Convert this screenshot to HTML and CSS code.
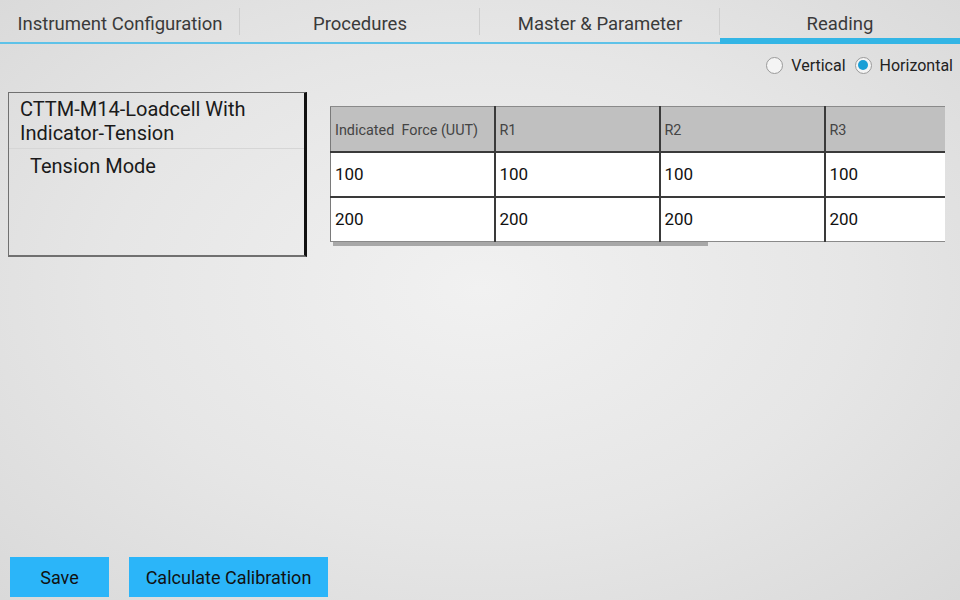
FILE: index.html
```html
<!DOCTYPE html>
<html lang="en">
<head>
    <meta charset="UTF-8">
    <meta name="viewport" content="width=device-width, initial-scale=1.0">
    <title>Reading</title>
    <link rel="stylesheet" href="styles.css">
</head>
<body>
    <div class="screen">
        <div class="tabs">
            <div class="tab">Instrument Configuration</div>
            <div class="tab">Procedures</div>
            <div class="tab">Master &amp; Parameter</div>
            <div class="tab active">Reading</div>
        </div>

        <div class="orientation">
            <label class="radio"><span class="dot"></span>Vertical</label>
            <label class="radio checked"><span class="dot"></span>Horizontal</label>
        </div>

        <div class="content">
            <div class="instrument-box">
                <div class="instrument-name">CTTM-M14-Loadcell With Indicator-Tension</div>
                <div class="instrument-mode">Tension Mode</div>
            </div>

            <div class="table-wrap">
                <table class="readings">
                    <thead>
                        <tr>
                            <th>Indicated&nbsp; Force (UUT)</th>
                            <th>R1</th>
                            <th>R2</th>
                            <th>R3</th>
                        </tr>
                    </thead>
                    <tbody>
                        <tr>
                            <td>100</td>
                            <td>100</td>
                            <td>100</td>
                            <td>100</td>
                        </tr>
                        <tr>
                            <td>200</td>
                            <td>200</td>
                            <td>200</td>
                            <td>200</td>
                        </tr>
                    </tbody>
                </table>
                <div class="scrollbar"></div>
            </div>
        </div>

        <div class="actions">
            <button class="btn save">Save</button>
            <button class="btn calc">Calculate Calibration</button>
        </div>
    </div>
</body>
</html>
```

FILE: styles.css
```css
html, body {
    margin: 0;
    padding: 0;
}
body {
    font-family: Roboto, "Noto Sans", sans-serif;
    color: #222;
    background: radial-gradient(ellipse at 50% 48%, #f1f1f1 0%, #e6e6e6 55%, #d9d9d9 100%);
    width: 960px;
    height: 600px;
    overflow: hidden;
}
.screen {
    display: flex;
    flex-direction: column;
    height: 600px;
}

/* tabs */
.tabs {
    display: flex;
    height: 44px;
}
.tab {
    width: 240px;
    height: 44px;
    box-sizing: border-box;
    padding-top: 13px;
    text-align: center;
    font-size: 18.5px;
    color: #3a3a3a;
    border-bottom: 2px solid #5ec2e8;
    position: relative;
}
.tab + .tab::before {
    content: "";
    position: absolute;
    left: -1px;
    top: 8px;
    height: 27px;
    width: 1px;
    background: #cfcfcf;
}
.tab.active {
    border-bottom: 6px solid #33b5e5;
}

/* radio buttons */
.orientation {
    display: flex;
    justify-content: flex-end;
    align-items: center;
    gap: 9px;
    padding-right: 7px;
    margin-top: 10px;
    height: 22px;
}
.radio {
    display: flex;
    align-items: center;
    font-size: 16px;
    color: #222;
}
.dot {
    width: 17px;
    height: 17px;
    border: 1px solid #9a9a9a;
    border-radius: 50%;
    margin-right: 8px;
    box-sizing: border-box;
    background: #f4f4f4;
    position: relative;
}
.radio.checked .dot::after {
    content: "";
    position: absolute;
    left: 2.5px;
    top: 2.5px;
    width: 10px;
    height: 10px;
    border-radius: 50%;
    background: #1a9fd6;
}

/* main content */
.content {
    display: flex;
    align-items: flex-start;
    padding-left: 8px;
    margin-top: 16px;
    flex: 1;
}
.instrument-box {
    width: 299px;
    height: 165px;
    box-sizing: border-box;
    border: 1px solid #707070;
    border-bottom-width: 2px;
    border-right: 3px solid #111;
    font-size: 20px;
    color: #1a1a1a;
}
.instrument-name {
    padding: 4px 12px 3px 11px;
    line-height: 24px;
    border-bottom: 1px solid #d6d6d6;
}
.instrument-mode {
    padding: 5px 21px;
    line-height: 24px;
}

.table-wrap {
    margin-left: 23px;
    margin-top: 14px;
    width: 615px;
    overflow: hidden;
}
.readings {
    border-collapse: collapse;
    table-layout: fixed;
    width: 659px;
}
.readings th,
.readings td {
    width: 165px;
    text-align: left;
    border: 2px solid #3a3a3a;
    padding: 0 0 0 4px;
    box-sizing: border-box;
}
.readings th:first-child,
.readings td:first-child {
    width: 164px;
    border-left: 1px solid #7a7a7a;
}
.readings thead th {
    height: 45px;
    padding-top: 4px;
    background: #c0c0c0;
    font-weight: normal;
    font-size: 14.4px;
    color: #444;
    border-top: 1px solid #8a8a8a;
}
.readings td {
    height: 45px;
    background: #fff;
    font-size: 17px;
    color: #111;
}
.readings tbody tr:last-child td {
    border-bottom: 1px solid #8a8a8a;
}
.scrollbar {
    width: 375px;
    height: 4px;
    margin-left: 3px;
    background: #a8a8a8;
}

/* bottom buttons */
.actions {
    display: flex;
    gap: 20px;
    padding: 0 0 3px 10px;
}
.btn {
    height: 40px;
    border: none;
    background: #2bb5f9;
    color: #111;
    font-family: Roboto, "Noto Sans", sans-serif;
    font-size: 18px;
    padding: 0;
}
.btn.save {
    width: 99px;
}
.btn.calc {
    width: 199px;
}
```
